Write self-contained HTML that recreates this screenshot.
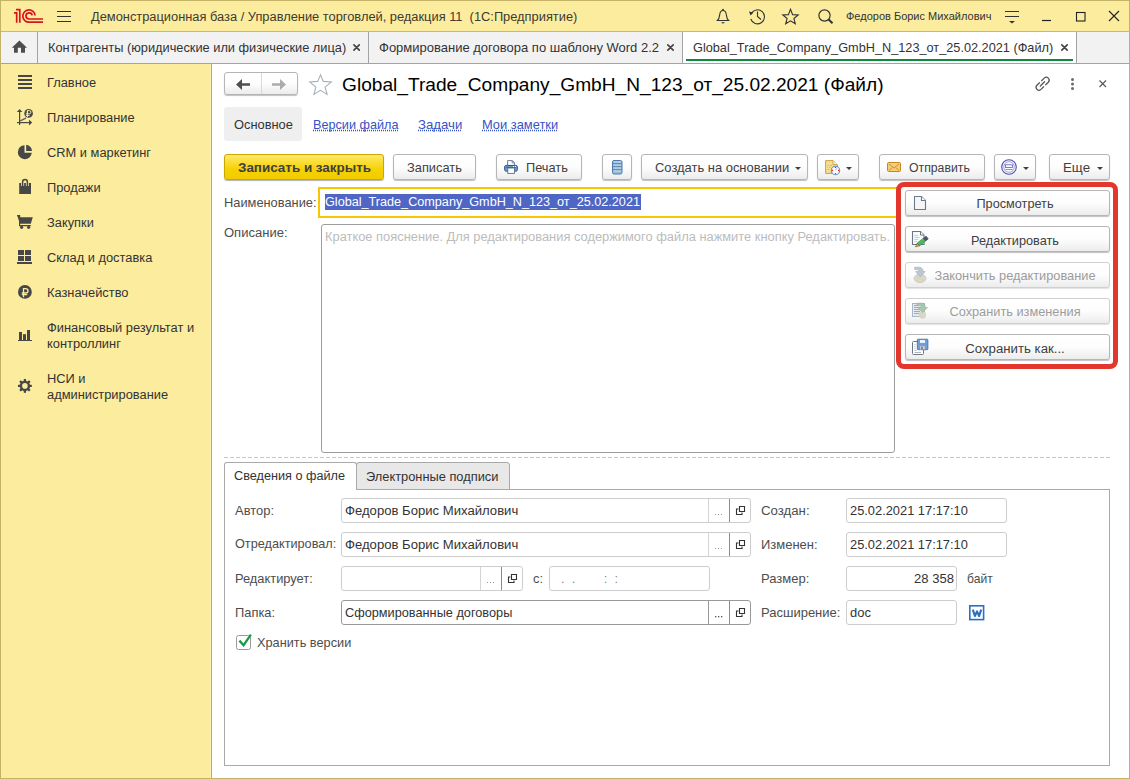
<!DOCTYPE html>
<html><head><meta charset="utf-8">
<style>
*{box-sizing:border-box;margin:0;padding:0}
html,body{width:1130px;height:779px;overflow:hidden;background:#fff}
body{position:relative;font-family:"Liberation Sans",sans-serif;font-size:13px;color:#333}
.a{position:absolute}
.t{position:absolute;white-space:nowrap;line-height:15px;font-size:12.85px}
svg{position:absolute;overflow:visible}
#win{left:0;top:0;width:1130px;height:779px;border:1px solid #c4b266}
#titlebar{left:1px;top:1px;width:1128px;height:31px;background:#fbec9e;border-bottom:1px solid #cbb96c}
#tabbar{left:1px;top:32px;width:1128px;height:32px;background:#f2f2f2;border-bottom:1px solid #a3a3a3}
.vsep{position:absolute;width:1px;background:#a3a3a3}
#side{left:1px;top:64px;width:211px;height:714px;background:#fbec9e;border-right:1px solid #bead60;box-shadow:inset -1px 0 0 #fdf1ad}
.side-t{position:absolute;left:47px;color:#333;font-size:12.85px;line-height:16px;white-space:nowrap}
.btn{position:absolute;height:26px;border:1px solid #b5b5b5;border-radius:3px;background:linear-gradient(#fff 0%,#fdfdfd 50%,#ececec 100%);box-shadow:0 1px 1px rgba(0,0,0,.25)}
.btn .bt{position:absolute;top:5px;white-space:nowrap;line-height:15px;color:#404040}
.fld{position:absolute;height:25px;border:1px solid #cdcdcd;border-radius:3px;background:#fff}
.lbl{position:absolute;white-space:nowrap;color:#4d4d4d;line-height:15px}
.lnk{color:#3552c6;text-decoration:underline dotted #3552c6;text-underline-offset:1px;text-decoration-skip-ink:none}
.dd{position:absolute;width:0;height:0;border-left:3px solid transparent;border-right:3px solid transparent;border-top:3px solid #404040}
</style></head>
<body>
<!-- title bar -->
<div id="titlebar" class="a"></div>
<div id="tabbar" class="a"></div>
<div id="side" class="a"></div>

<!-- 1C logo -->
<svg class="a" style="left:0;top:0" width="60" height="31" viewBox="0 0 60 31">
 <g fill="none" stroke="#d9141c" stroke-width="1.7" stroke-linecap="butt">
  <path d="M19.8 22.8 V9.7 H16"/>
  <path d="M16.7 22.8 V12.8 H14"/>
  <path d="M35.1 15.5 A6.15 6.15 0 1 0 29.15 22.2 L43 22.2"/>
  <path d="M32.15 15.4 A3.1 3.1 0 1 0 29.1 19.0 L43 19.0"/>
 </g>
</svg>
<!-- hamburger -->
<div class="a" style="left:57px;top:11px;width:14px;height:1px;background:#333"></div>
<div class="a" style="left:57px;top:16px;width:14px;height:1px;background:#333"></div>
<div class="a" style="left:57px;top:21px;width:14px;height:1px;background:#333"></div>
<div class="t" id="wtitle" style="left:91px;top:9px;font-size:12.85px;color:#3f3a30">Демонстрационная база / Управление торговлей, редакция 11&nbsp; (1С:Предприятие)</div>
<!-- bell -->
<svg class="a" style="left:0;top:0" width="1130" height="31">
 <g fill="none" stroke="#333" stroke-width="1.1">
  <path d="M716.5 20.5 H729.5 M717.5 20.5 C719.5 18.5 719.5 16 719.8 14 C720.2 11.5 721.5 10.5 723 10.5 C724.5 10.5 725.8 11.5 726.2 14 C726.5 16 726.5 18.5 728.5 20.5"/>
 </g>
 <circle cx="723" cy="9.6" r="0.9" fill="#333"/>
 <path d="M721 22.3 H725 L723 23.8 Z" fill="#333"/>
 <!-- history -->
 <g fill="none" stroke="#333" stroke-width="1.1">
  <path d="M751.3 13.5 A7 7 0 1 1 750.8 19"/>
  <path d="M757.5 11.5 V16.5 L761 19.5"/>
 </g>
 <path d="M749 11.5 L753.5 12.5 L750.5 15.5 Z" fill="#333"/>
 <!-- star -->
 <path d="M790.5 9.3 L792.6 14.6 L798.2 14.9 L793.9 18.5 L795.3 23.8 L790.5 20.8 L785.7 23.8 L787.1 18.5 L782.8 14.9 L788.4 14.6 Z" fill="none" stroke="#333" stroke-width="1.1" stroke-linejoin="miter"/>
 <!-- search -->
 <circle cx="824.5" cy="15.5" r="5.6" fill="none" stroke="#333" stroke-width="1.2"/>
 <path d="M828.6 19.6 L832.5 23.3" stroke="#333" stroke-width="2" fill="none"/>
 <!-- filter -->
 <path d="M1005 11.5 H1019 M1005 16.5 H1019" stroke="#333" stroke-width="1.1"/>
 <path d="M1009 21 H1015 L1012 23.6 Z" fill="#333"/>
 <!-- minimize -->
 <path d="M1042 20.5 H1051" stroke="#222" stroke-width="1.2"/>
 <!-- maximize -->
 <rect x="1076.5" y="12.5" width="8.5" height="8.5" fill="none" stroke="#222" stroke-width="1.1"/>
 <!-- close -->
 <path d="M1109 11 L1119 21 M1119 11 L1109 21" stroke="#222" stroke-width="1.1"/>
</svg>
<div class="t" id="uname" style="left:846px;top:9px;font-size:11px;color:#333">Федоров Борис Михайлович</div>

<!-- tab bar -->
<svg class="a" style="left:0;top:31px" width="40" height="33">
 <path d="M11.8 16.7 L19.4 9.5 L27 16.7 L25 16.7 L25 21.8 L21 21.8 L21 16.7 L17.8 16.7 L17.8 21.8 L14 21.8 L14 16.7 Z" fill="#4d4d4d"/>
</svg>
<div class="vsep" style="left:37px;top:32px;height:31px"></div>
<div class="t" style="left:48px;top:40px;color:#333;font-size:12.8px">Контрагенты (юридические или физические лица)</div>
<div class="vsep" style="left:368px;top:32px;height:31px"></div>
<div class="t" style="left:379px;top:40px;color:#333;font-size:13px">Формирование договора по шаблону Word 2.2</div>
<div class="vsep" style="left:682px;top:32px;height:31px"></div>
<div class="a" style="left:683px;top:32px;width:393px;height:31px;background:#fff"></div>
<div class="a" style="left:686px;top:59px;width:387px;height:2px;background:#0b8a3e"></div>
<div class="t" style="left:693px;top:40px;color:#333;font-size:12.72px">Global_Trade_Company_GmbH_N_123_от_25.02.2021 (Файл)</div>
<div class="vsep" style="left:1076px;top:32px;height:31px"></div>
<svg class="a" style="left:0;top:0" width="1130" height="64">
 <g stroke="#444" stroke-width="1.65" stroke-linecap="round">
  <path d="M353.9 44.8 L359.3 50.2 M359.3 44.8 L353.9 50.2"/>
  <path d="M667.8 44.8 L673.2 50.2 M673.2 44.8 L667.8 50.2"/>
  <path d="M1061.8 44.8 L1067.2 50.2 M1067.2 44.8 L1061.8 50.2"/>
 </g>
</svg>


<!-- sidebar -->
<div class="side-t" style="top:75px">Главное</div>
<div class="side-t" style="top:110px">Планирование</div>
<div class="side-t" style="top:145px">CRM и маркетинг</div>
<div class="side-t" style="top:180px">Продажи</div>
<div class="side-t" style="top:215px">Закупки</div>
<div class="side-t" style="top:250px">Склад и доставка</div>
<div class="side-t" style="top:285px">Казначейство</div>
<div class="side-t" style="top:320px">Финансовый результат и<br>контроллинг</div>
<div class="side-t" style="top:371px">НСИ и<br>администрирование</div>
<svg class="a" style="left:0;top:0" width="212" height="420">
 <g fill="#474747">
  <!-- главное -->
  <rect x="18" y="75" width="14" height="2"/><rect x="18" y="79" width="14" height="2"/><rect x="18" y="83" width="14" height="2"/><rect x="18" y="87" width="14" height="2"/>
  <!-- планирование -->
  <rect x="19" y="111" width="1.2" height="14"/>
  <path d="M16.8 112 L19.6 109 L22.4 112 Z"/>
  <rect x="17" y="122" width="13" height="1.2"/>
  <path d="M29 119.8 L32.2 122.6 L29 125.4 Z"/>
  <path d="M20.4 121 L21.6 120 H22.6 L23.6 119 H24.6 L25.6 118 H26" fill="none" stroke="#474747" stroke-width="1.1"/>
  <circle cx="28.6" cy="113.4" r="4.3"/>
  <path d="M27.4 110.6 H29.3 A1.6 1.6 0 0 1 29.3 113.8 H27.4 Z M27.4 110.6 V117 M25.9 113.8 H27.4 M25.9 115.4 H29.6" fill="none" stroke="#fbec9e" stroke-width="1"/>
  <!-- crm -->
  <path d="M24.5 145.2 V152.8 H31.8 A7 7 0 1 1 24.5 145.2 Z"/>
  <path d="M26.2 144.8 A6.8 6.8 0 0 1 32 150.9 H26.2 Z"/>
  <!-- продажи -->
  <rect x="19.2" y="183" width="11.8" height="11"/>
  <path d="M22.6 186 V182.8 M27.4 186 V182.8" fill="none" stroke="#fbec9e" stroke-width="3"/>
  <path d="M22.6 186 V182 A2.4 2.4 0 0 1 27.4 182 V186" fill="none" stroke="#474747" stroke-width="1.5"/>
  <!-- закупки -->
  <path d="M17.2 215.3 H19.8 V223.8 M19.8 217.2 H32.8 L30.8 223.8 H19.8 Z"/>
  <path d="M17.2 215.7 H19.6 V225.6 H30.8" fill="none" stroke="#474747" stroke-width="1.2"/>
  <circle cx="21.6" cy="227.3" r="1.6"/><circle cx="28.6" cy="227.3" r="1.6"/>
  <!-- склад -->
  <rect x="18" y="250" width="6" height="5"/><rect x="25" y="250" width="6" height="5"/>
  <rect x="18" y="256" width="6" height="5"/><rect x="25" y="256" width="6" height="5"/>
  <rect x="17" y="262" width="15" height="2"/>
  <!-- казначейство -->
  <circle cx="24.9" cy="291.9" r="6.9"/>
  <path d="M23.5 297.2 V288.6 H25.8 A2.2 2.2 0 0 1 25.8 293 H21.8 M21.8 294.6 H27.2" fill="none" stroke="#fbec9e" stroke-width="1.3"/>
  <!-- финансовый -->
  <rect x="19" y="332" width="3" height="8.5"/><rect x="23" y="334.2" width="3" height="6.3"/><rect x="27" y="330" width="3" height="10.5"/>
  <rect x="18" y="340" width="14" height="1"/>
  <!-- нси gear -->
  <g transform="translate(24.9 385.9)">
   <rect x="-1.1" y="-6.9" width="2.2" height="13.8"/>
   <rect x="-6.9" y="-1.1" width="13.8" height="2.2"/>
   <rect x="-1.1" y="-6.9" width="2.2" height="13.8" transform="rotate(45)"/>
   <rect x="-6.9" y="-1.1" width="13.8" height="2.2" transform="rotate(45)"/>
   <rect x="-4.5" y="-4.5" width="9" height="9"/>
   <rect x="-4.5" y="-4.5" width="9" height="9" transform="rotate(45)"/>
   <circle r="2.8" fill="#fbec9e"/>
  </g>
 </g>
</svg>


<!-- ===== MAIN HEADER ===== -->
<div class="btn" style="left:224px;top:72px;width:74px;height:23px"></div>
<div class="a" style="left:261px;top:73px;width:1px;height:21px;background:#d9d9d9"></div>
<svg class="a" style="left:0;top:0" width="1130" height="110">
 <path d="M236 84.5 L242 79 V83.3 H250 V85.8 H242 V90 Z" fill="#4f4f4f"/>
 <path d="M286 84.5 L280 79 V83.3 H272 V85.8 H280 V90 Z" fill="#ababab"/>
 <path d="M320.5 74.8 L323.3 81.4 L331.3 82 L325.1 87.1 L327.1 94.4 L320.5 90.4 L313.9 94.4 L315.9 87.1 L309.7 82 L317.7 81.4 Z" fill="none" stroke="#a7b0b9" stroke-width="1.1"/>
 <!-- link -->
 <g fill="none" stroke="#555" stroke-width="1.25" stroke-linecap="round" transform="translate(0 -0.9)">
  <path d="M1041.6 81.6 L1044.2 79 A2.9 2.9 0 0 1 1048.3 83.1 L1045.7 85.7"/>
  <path d="M1043.6 87.7 L1041 90.3 A2.9 2.9 0 0 1 1036.9 86.2 L1039.5 83.6"/>
  <path d="M1040.3 86.9 L1044.6 82.6"/>
 </g>
 <circle cx="1072.5" cy="79.6" r="1.5" fill="#6a6a6a"/>
 <circle cx="1072.5" cy="84" r="1.5" fill="#6a6a6a"/>
 <circle cx="1072.5" cy="88.4" r="1.5" fill="#6a6a6a"/>
 <path d="M1099.5 80.5 L1106 87 M1106 80.5 L1099.5 87" stroke="#555" stroke-width="1.1"/>
</svg>
<div class="t" id="doctitle" style="left:342px;top:74.5px;font-size:19.14px;line-height:20px;color:#000">Global_Trade_Company_GmbH_N_123_от_25.02.2021 (Файл)</div>

<!-- form tabs -->
<div class="a" style="left:224px;top:107px;width:78px;height:34px;background:#efefef;border-radius:3px"></div>
<div class="t" style="left:234px;top:117px;color:#333">Основное</div>
<div class="t lnk" style="left:313px;top:118px;font-size:12.66px">Версии файла</div>
<div class="t lnk" style="left:418px;top:117px;font-size:13.19px">Задачи</div>
<div class="t lnk" style="left:482px;top:117px;font-size:12.86px">Мои заметки</div>

<!-- toolbar -->
<div class="a" style="left:224px;top:154px;width:160px;height:26px;border:1px solid #c9a700;border-radius:3px;background:linear-gradient(#fde96a,#f6d200 60%,#f2cb00);box-shadow:0 1px 1px rgba(0,0,0,.3)"></div>
<div class="t" style="left:238px;top:160px;font-weight:bold;color:#404040;font-size:13.43px">Записать и закрыть</div>
<div class="btn" style="left:393px;top:154px;width:83px;height:26px"><span class="bt" style="left:13px;font-size:12.83px">Записать</span></div>
<div class="btn" style="left:496px;top:154px;width:86px;height:26px"><span class="bt" style="left:29px;font-size:12.77px">Печать</span></div>
<div class="btn" style="left:602px;top:154px;width:30px;height:26px"></div>
<div class="btn" style="left:641px;top:154px;width:167px;height:26px"><span class="bt" style="left:13px;font-size:12.94px">Создать на основании</span></div>
<div class="btn" style="left:817px;top:154px;width:42px;height:26px"></div>
<div class="btn" style="left:879px;top:154px;width:106px;height:26px"><span class="bt" style="top:6px;left:29px;font-size:12.27px">Отправить</span></div>
<div class="btn" style="left:994px;top:154px;width:42px;height:26px"></div>
<div class="btn" style="left:1049px;top:154px;width:61px;height:26px"><span class="bt" style="left:13px;font-size:13.29px">Еще</span></div>
<div class="dd" style="left:795px;top:167px"></div>
<div class="dd" style="left:846px;top:167px"></div>
<div class="dd" style="left:1023px;top:167px"></div>
<div class="dd" style="left:1097px;top:167px"></div>
<svg class="a" style="left:0;top:0" width="1130" height="190">
 <!-- printer -->
 <g>
  <path d="M507.6 160.6 H512.4 L514.4 162.6 V165.5 H507.6 Z" fill="#fff" stroke="#5a6e88" stroke-width="0.9"/>
  <path d="M512.2 160.6 V162.8 H514.4" fill="none" stroke="#5a6e88" stroke-width="0.8"/>
  <rect x="504.6" y="165.4" width="12.8" height="5.8" rx="1.6" fill="#6f98c8" stroke="#2d5a8a" stroke-width="1"/>
  <path d="M506.2 167.4 H515.8" stroke="#2d5a8a" stroke-width="0.9"/>
  <rect x="513" y="166" width="1" height="1" fill="#fff"/><rect x="515" y="166" width="1" height="1" fill="#fff"/>
  <rect x="507.8" y="168" width="6.6" height="5.4" fill="#fff" stroke="#5a6e88" stroke-width="0.9"/>
 </g>
 <!-- list icon -->
 <rect x="612.5" y="160.5" width="9.5" height="13.5" rx="1.5" fill="#9ab8d8" stroke="#4a7cb0" stroke-width="1"/>
 <path d="M613 163.7 H621.5 M613 166.7 H621.5 M613 169.7 H621.5" stroke="#4a7cb0" stroke-width="0.9"/>
 <path d="M613.5 162 H621 M613.5 165 H621 M613.5 168 H621 M613.5 171 H621" stroke="#dbe8f4" stroke-width="0.8"/>
 <!-- doc clock -->
 <path d="M825.6 160.6 H833 L837.4 165 V173.4 H825.6 Z" fill="#f5df8e" stroke="#c9a24a" stroke-width="1" stroke-linejoin="round"/>
 <path d="M833 160.6 V164.6 H837.4" fill="#fbefb8" stroke="#c9a24a" stroke-width="0.9"/>
 <path d="M827.3 165.5 H828.8 M829.8 165.5 H832 M827.3 167.5 H827.8 M829 167.5 H830.5 M827.3 169.5 H829.2" stroke="#d2b45c" stroke-width="0.8"/>
 <circle cx="835.5" cy="170.5" r="4.2" fill="#fff" stroke="#5b8bbd" stroke-width="1.1"/>
 <circle cx="835.5" cy="170.5" r="3.5" fill="none" stroke="#cfe2f5" stroke-width="0.5"/>
 <path d="M835.5 170.5 L836.8 168.2" stroke="#8fb0d8" stroke-width="0.9"/>
 <circle cx="835.5" cy="167.4" r="0.65" fill="#e51a1a"/><circle cx="835.5" cy="173.6" r="0.65" fill="#e51a1a"/>
 <circle cx="832.4" cy="170.5" r="0.65" fill="#e51a1a"/><circle cx="838.6" cy="170.5" r="0.65" fill="#e51a1a"/>
 <!-- envelope -->
 <rect x="887.5" y="162.5" width="13" height="9" rx="1.2" fill="#f5cd78" stroke="#c9861e" stroke-width="1"/>
 <path d="M889 164 L894 168 L899 164 M889 170.5 L892.3 167.5 M899 170.5 L895.7 167.5" fill="none" stroke="#c9862a" stroke-width="0.9"/>
 <!-- stamp -->
 <circle cx="1009" cy="167" r="7.3" fill="#fafaff" stroke="#4d4daa" stroke-width="1.1"/>
 <circle cx="1009" cy="167" r="5.3" fill="none" stroke="#8c8cc8" stroke-width="0.8"/>
 <rect x="1005.5" y="164.8" width="7" height="2.6" fill="none" stroke="#5a5ac8" stroke-width="0.8"/>
 <path d="M1005.5 169.5 H1012.5" stroke="#5a5ac8" stroke-width="0.7"/>
</svg>

<!-- name / description -->
<div class="lbl" style="left:224px;top:195px;color:#4d4d4d;font-size:12.83px">Наименование:</div>
<div class="a" style="left:318px;top:187px;width:790px;height:31px;border:2px solid #f8c600;background:#fff"></div>
<div class="a" style="left:325px;top:194px;width:316px;height:16px;background:#4f66c4"></div>
<div class="t" style="left:325px;top:195px;color:#fff;font-size:12.65px">Global_Trade_Company_GmbH_N_123_от_25.02.2021</div>
<div class="lbl" style="left:224px;top:225px;color:#4d4d4d;font-size:13.02px">Описание:</div>
<div class="a" style="left:321px;top:224px;width:574px;height:229px;border:1px solid #9d9d9d;border-radius:3px;background:#fff"></div>
<div class="t" style="left:325px;top:229px;color:#bcbcbc;font-size:12.88px">Краткое пояснение. Для редактирования содержимого файла нажмите кнопку Редактировать.</div>

<!-- red box -->
<div class="a" style="left:896px;top:182px;width:222px;height:187px;border:5px solid #e3362c;border-radius:8px;background:#fff"></div>
<div class="btn" style="left:905px;top:190px;width:205px;height:26px"><span class="bt" style="top:6px;left:15px;right:0;text-align:center;font-size:12.69px">Просмотреть</span></div>
<div class="btn" style="left:905px;top:226px;width:205px;height:26px"><span class="bt" style="top:6px;left:15px;right:0;text-align:center;font-size:12.72px">Редактировать</span></div>
<div class="btn" style="left:905px;top:262px;width:205px;height:26px;border-color:#d0d0d0;box-shadow:0 1px 1px rgba(0,0,0,.12)"><span class="bt" style="top:5px;left:15px;right:0;text-align:center;color:#9c9c9c;font-size:12.79px">Закончить редактирование</span></div>
<div class="btn" style="left:905px;top:298px;width:205px;height:26px;border-color:#d0d0d0;box-shadow:0 1px 1px rgba(0,0,0,.12)"><span class="bt" style="top:5px;left:15px;right:0;text-align:center;color:#9c9c9c;font-size:12.77px">Сохранить изменения</span></div>
<div class="btn" style="left:905px;top:334px;width:205px;height:26px"><span class="bt" style="top:6px;left:15px;right:0;text-align:center;font-size:13.22px">Сохранить как...</span></div>
<svg class="a" style="left:0;top:0" width="1130" height="380">
 <!-- view doc -->
 <path d="M914.5 196.5 H921.5 L925.5 200.5 V209.5 H914.5 Z" fill="#f6f6f6" stroke="#6a7a8e" stroke-width="1.1"/>
 <path d="M921.5 196.5 V200.5 H925.5" fill="#fff" stroke="#6a7a8e" stroke-width="1.1"/>
 <!-- edit -->
 <path d="M912.5 231.5 H920.5 L924 235 V244.5 H912.5 Z" fill="#f8f9fb" stroke="#6b7784" stroke-width="1.1"/>
 <path d="M920.5 231.5 V235 H924" fill="#fff" stroke="#6b7784" stroke-width="1"/>
 <path d="M914.5 235.5 H918 M914.5 237.5 H919.5 M914.5 239.5 H918 M914.5 241.5 H917" stroke="#b5c3d4" stroke-width="0.8"/>
 <g transform="translate(-0.8 0)"><path d="M917.94 243.13 L924.22 238.19 L926.44 241.01 L920.16 245.95 Z" fill="#4cbc5c" stroke="#237a33" stroke-width="0.6"/>
 <path d="M924.22 238.19 L926.89 236.09 L929.11 238.91 L926.44 241.01 Z" fill="#4a5566" stroke="#3a4454" stroke-width="0.5"/>
 <path d="M917.94 243.13 L920.16 245.95 L916.1 246.9 Z" fill="#d9a75a" stroke="#6a4a20" stroke-width="0.5"/></g>
 <!-- finish edit -->
 <ellipse cx="920" cy="278.3" rx="6" ry="4.4" fill="#d9d6c6" stroke="#c6c2b0" stroke-width="0.6"/>
 <path d="M914.7 267.2 H920.7 L922.8 269.4 V271.5 H925.2 L920.3 276.9 L915.6 271.5 H918.7 V269.6 H914.7 Z" fill="#bcc8d0" stroke="#a3b0b9" stroke-width="0.6"/>
 <!-- save changes -->
 <rect x="912.5" y="303.5" width="12" height="13" fill="#e6e9ee" stroke="#a8b6c8" stroke-width="1"/>
 <path d="M914 305.5 H918 M914 307.5 H920 M914 309.5 H920 M914 311.5 H920 M914 313.5 H920" stroke="#93a4bb" stroke-width="0.9"/>
 <ellipse cx="922.5" cy="315" rx="3.6" ry="3.7" fill="#d8d6c4"/>
 <path d="M917 303.2 H923 L925.1 305.4 V307.5 H927.5 L922.6 312.5 L917.9 307.5 H921 V305.6 H917 Z" fill="#a9c6b4" stroke="#8fb09a" stroke-width="0.6"/>
 <!-- save as -->
 <rect x="912.5" y="341.5" width="11" height="13" rx="1" fill="#fff" stroke="#6d7882" stroke-width="1"/>
 <path d="M914.5 344.5 H915.5 M914.5 346.5 H915.5 M914.5 348.5 H915.5 M914.5 350.5 H916.5 M914.5 352.5 H921" stroke="#8a96a0" stroke-width="0.7"/>
 <rect x="917.3" y="339.2" width="10.6" height="10.5" rx="0.8" fill="#6f9ed8" stroke="#3f6aa6" stroke-width="0.8"/>
 <rect x="920" y="340.2" width="5" height="2.6" fill="#fff"/>
 <rect x="920" y="346" width="4.8" height="3.5" fill="#c9ccc8"/>
 <rect x="921.3" y="346.6" width="1.3" height="2.9" fill="#4a6a9a"/>
</svg>


<!-- ===== BOTTOM TABS ===== -->
<svg class="a" style="left:0;top:450px" width="1130" height="14">
 <path d="M224 7.5 H1110" stroke="#c9c9c9" stroke-width="1" stroke-dasharray="4 2"/>
</svg>
<div class="a" style="left:224px;top:489px;width:886px;height:277px;border:1px solid #a9a9a9;background:#fff"></div>
<div class="a" style="left:356px;top:462px;width:154px;height:28px;border:1px solid #a9a9a9;border-radius:3px 3px 0 0;background:#e8e8e8"></div>
<div class="a" style="left:224px;top:462px;width:133px;height:28px;border:1px solid #a9a9a9;border-bottom:none;border-radius:3px 3px 0 0;background:#fff"></div>
<div class="t" style="left:234px;top:469px;color:#333;font-size:12.68px">Сведения о файле</div>
<div class="t" style="left:366px;top:469px;color:#333;font-size:12.83px">Электронные подписи</div>

<div class="lbl" style="left:235px;top:503px;font-size:12.95px">Автор:</div>
<div class="lbl" style="left:235px;top:537px;font-size:12.7px">Отредактировал:</div>
<div class="lbl" style="left:235px;top:571px;font-size:12.85px">Редактирует:</div>
<div class="lbl" style="left:235px;top:605px;font-size:12.9px">Папка:</div>

<div class="fld" style="left:341px;top:498px;width:410px"></div>
<div class="fld" style="left:341px;top:532px;width:410px"></div>
<div class="fld" style="left:341px;top:566px;width:182px"></div>
<div class="fld" style="left:341px;top:600px;width:410px;border-color:#999"></div>
<div class="a" style="left:708px;top:499px;width:1px;height:23px;background:#d4d4d4"></div>
<div class="a" style="left:729px;top:499px;width:1px;height:23px;background:#8c8c8c"></div>
<div class="a" style="left:708px;top:533px;width:1px;height:23px;background:#d4d4d4"></div>
<div class="a" style="left:729px;top:533px;width:1px;height:23px;background:#8c8c8c"></div>
<div class="a" style="left:480px;top:567px;width:1px;height:23px;background:#d4d4d4"></div>
<div class="a" style="left:501px;top:567px;width:1px;height:23px;background:#8c8c8c"></div>
<div class="a" style="left:708px;top:601px;width:1px;height:23px;background:#999"></div>
<div class="a" style="left:729px;top:601px;width:1px;height:23px;background:#8c8c8c"></div>
<div class="t" style="left:345px;top:503px;color:#333;font-size:13.11px">Федоров Борис Михайлович</div>
<div class="t" style="left:345px;top:537px;color:#333;font-size:13.11px">Федоров Борис Михайлович</div>
<div class="t" style="left:345px;top:605px;color:#333;font-size:12.74px">Сформированные договоры</div>
<svg class="a" style="left:0;top:0" width="1130" height="660">
 <g fill="#9a9a9a">
  <rect x="715" y="514" width="1" height="1"/><rect x="718" y="514" width="1" height="1"/><rect x="721" y="514" width="1" height="1"/>
  <rect x="715" y="548" width="1" height="1"/><rect x="718" y="548" width="1" height="1"/><rect x="721" y="548" width="1" height="1"/>
  <rect x="487" y="582" width="1" height="1"/><rect x="490" y="582" width="1" height="1"/><rect x="493" y="582" width="1" height="1"/>
 </g>
 <g fill="#555"><rect x="715" y="616" width="1.3" height="1.3"/><rect x="718" y="616" width="1.3" height="1.3"/><rect x="721" y="616" width="1.3" height="1.3"/></g>
 <g fill="none" stroke="#333" stroke-width="1.1">
  <path id="op" d="M738.5 509 H736.5 V514.5 H742 V512.5 M739.5 506.5 H744.5 V511.5 H739.5 Z"/>
  <path d="M738.5 543 H736.5 V548.5 H742 V546.5 M739.5 540.5 H744.5 V545.5 H739.5 Z"/>
  <path d="M510.5 577 H508.5 V582.5 H514 V580.5 M511.5 574.5 H516.5 V579.5 H511.5 Z"/>
  <path d="M738.5 611 H736.5 V616.5 H742 V614.5 M739.5 608.5 H744.5 V613.5 H739.5 Z"/>
 </g>
 <!-- W icon -->
 <rect x="969.8" y="605.8" width="13.8" height="13.8" fill="#fff" stroke="#2a6fc2" stroke-width="1.6"/>
 <path d="M972.8 609.6 L974.9 616 L977 611.4 L979.1 616 L981.2 609.6" fill="none" stroke="#2a6fc2" stroke-width="2.1" stroke-linejoin="round"/>
 <!-- checkbox -->
 <rect x="236.5" y="635.5" width="14" height="14" rx="2" fill="#fff" stroke="#9a9a9a" stroke-width="1"/>
 <path d="M239.4 640.6 L243.6 645.2 L250.9 634.6" fill="none" stroke="#1a9a48" stroke-width="2.3"/>
</svg>
<div class="t" style="left:533px;top:571px;color:#4d4d4d">с:</div>
<div class="fld" style="left:549px;top:566px;width:161px"></div>
<div class="t" style="left:561px;top:571px;color:#8a8a8a;letter-spacing:0px">.&nbsp;&nbsp;.&nbsp;&nbsp;&nbsp;&nbsp;&nbsp;&nbsp;&nbsp;&nbsp;:&nbsp;&nbsp;:</div>

<div class="lbl" style="left:761px;top:503px;font-size:13.22px">Создан:</div>
<div class="lbl" style="left:761px;top:537px;font-size:12.97px">Изменен:</div>
<div class="lbl" style="left:761px;top:571px;font-size:13.0px">Размер:</div>
<div class="lbl" style="left:761px;top:605px;font-size:13.0px">Расширение:</div>
<div class="fld" style="left:846px;top:498px;width:161px"></div>
<div class="fld" style="left:846px;top:532px;width:161px"></div>
<div class="fld" style="left:846px;top:566px;width:111px"></div>
<div class="fld" style="left:846px;top:600px;width:111px"></div>
<div class="t" style="left:850px;top:503px;color:#333;font-size:12.85px">25.02.2021 17:17:10</div>
<div class="t" style="left:850px;top:537px;color:#333;font-size:12.85px">25.02.2021 17:17:10</div>
<div class="t" style="left:846px;top:571px;width:108px;text-align:right;color:#333;font-size:13.05px">28 358</div>
<div class="t" style="left:850px;top:605px;color:#333;font-size:12.94px">doc</div>
<div class="t" style="left:967px;top:572px;color:#4d4d4d;font-size:12.1px">байт</div>
<div class="t" style="left:257px;top:635px;color:#4d4d4d;font-size:12.75px">Хранить версии</div>

<div id="win" class="a"></div>
</body></html>
